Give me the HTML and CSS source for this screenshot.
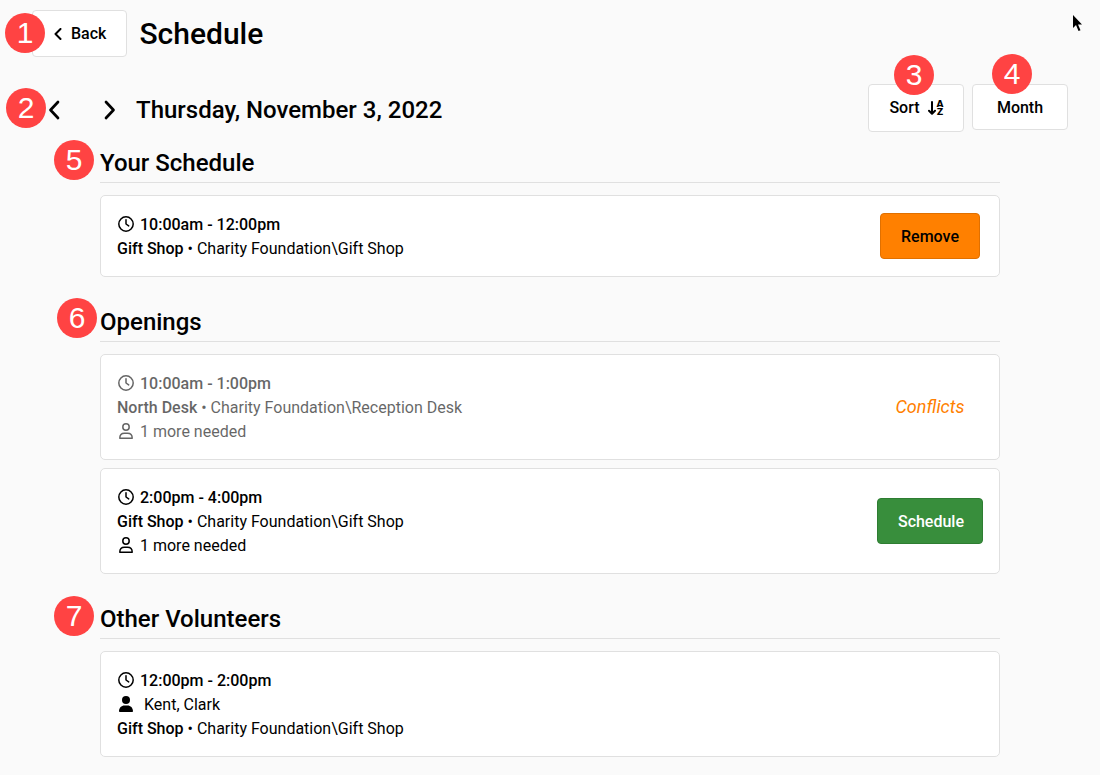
FILE: index.html
```html
<!DOCTYPE html>
<html lang="en">

<head>
    <meta charset="UTF-8" />
    <meta name="viewport" content="width=device-width, initial-scale=1" />
    <title>Schedule</title>
    <link rel="stylesheet" href="styles.css">
</head>

<body>
    <!-- shared icons -->
    <svg class="sprite" aria-hidden="true">
        <symbol id="icon-clock" viewBox="0 0 16 16">
            <circle cx="8" cy="8" r="7.2" fill="none" stroke="currentColor" stroke-width="1.5" />
            <path d="M8 3.8V8l2.7 1.9" fill="none" stroke="currentColor" stroke-width="1.5" stroke-linecap="round" stroke-linejoin="round" />
        </symbol>
        <symbol id="icon-user" viewBox="0 0 16 16">
            <circle cx="8" cy="4" r="3.2" fill="none" stroke="currentColor" stroke-width="1.5" />
            <path d="M1.8 15.2c0-3 2-4.9 4.6-4.9h3.2c2.6 0 4.6 1.9 4.6 4.9z" fill="none" stroke="currentColor" stroke-width="1.5" stroke-linejoin="round" />
        </symbol>
        <symbol id="icon-user-solid" viewBox="0 0 16 16">
            <circle cx="8" cy="4" r="4" fill="currentColor" />
            <path d="M1 15.2C1 11.9 3.4 9.5 6.5 9.5h3c3.1 0 5.5 2.4 5.5 5.7 0 .5-.3.8-.8.8H1.8c-.5 0-.8-.3-.8-.8z" fill="currentColor" />
        </symbol>
    </svg>

    <header class="header">
        <div class="marked">
            <button class="btn btn-back" type="button">
                <svg class="back-icon" viewBox="0 0 8 12"><path d="M6.5 1L1.500 6l5 5" /></svg>
                Back
            </button>
            <span class="badge badge-back">1</span>
        </div>
        <h1>Schedule</h1>
    </header>

    <div class="toolbar">
        <div class="marked date-nav">
            <button class="arrow" type="button" aria-label="Previous day">
                <svg viewBox="0 0 12 20"><path d="M10 2L2.500 10l7.500 8" /></svg>
            </button>
            <button class="arrow" type="button" aria-label="Next day">
                <svg viewBox="0 0 12 20"><path d="M2 2l7.500 8L2 18" /></svg>
            </button>
            <span class="badge badge-nav">2</span>
        </div>
        <h2 class="date">Thursday, November 3, 2022</h2>
        <div class="marked">
            <button class="btn btn-sort" type="button">
                Sort
                <svg class="sort-icon" viewBox="0 0 16 16">
                    <path d="M4 2v11.500M1 10.800l3 3 3-3" />
                    <text x="12" y="7">A</text>
                    <text x="12" y="15">Z</text>
                </svg>
            </button>
            <span class="badge badge-sort">3</span>
        </div>
        <div class="marked">
            <button class="btn" type="button">Month</button>
            <span class="badge badge-month">4</span>
        </div>
    </div>

    <main class="content">
        <section>
            <h2 class="marked">Your Schedule<span class="badge badge-section">5</span></h2>
            <div class="card">
                <div class="info">
                    <p class="time"><svg class="icon"><use href="#icon-clock" /></svg>10:00am - 12:00pm</p>
                    <p><b>Gift Shop</b> • Charity Foundation\Gift Shop</p>
                </div>
                <div class="action">
                    <button class="btn btn-remove" type="button">Remove</button>
                </div>
            </div>
        </section>

        <section>
            <h2 class="marked">Openings<span class="badge badge-openings">6</span></h2>
            <div class="card">
                <div class="info muted">
                    <p class="time"><svg class="icon"><use href="#icon-clock" /></svg>10:00am - 1:00pm</p>
                    <p><b>North Desk</b> • Charity Foundation\Reception Desk</p>
                    <p><svg class="icon"><use href="#icon-user" /></svg>1 more needed</p>
                </div>
                <div class="action">
                    <em class="conflicts">Conflicts</em>
                </div>
            </div>
            <div class="card">
                <div class="info">
                    <p class="time"><svg class="icon"><use href="#icon-clock" /></svg>2:00pm - 4:00pm</p>
                    <p><b>Gift Shop</b> • Charity Foundation\Gift Shop</p>
                    <p><svg class="icon"><use href="#icon-user" /></svg>1 more needed</p>
                </div>
                <div class="action">
                    <button class="btn btn-schedule" type="button">Schedule</button>
                </div>
            </div>
        </section>

        <section>
            <h2 class="marked">Other Volunteers<span class="badge badge-section">7</span></h2>
            <div class="card">
                <div class="info">
                    <p class="time"><svg class="icon"><use href="#icon-clock" /></svg>12:00pm - 2:00pm</p>
                    <p><svg class="icon icon-person"><use href="#icon-user-solid" /></svg>Kent, Clark</p>
                    <p><b>Gift Shop</b> • Charity Foundation\Gift Shop</p>
                </div>
            </div>
        </section>
    </main>

    <svg class="cursor" viewBox="0 0 9 17" aria-hidden="true">
        <path d="M0 0v13l3-3 2.500 6 2-.8L5 9.500h4z" />
    </svg>
</body>

</html>
```
FILE: styles.css
```css
* {
    box-sizing: border-box;
}

body {
    background-color: #fafafa;
    color: #000;
    font-family: Roboto, Arial, sans-serif;
    font-size: 16px;
    line-height: 24px;
    margin: 0;
    padding: 10px 0 16px;
    position: relative;
}

h1,
h2,
p {
    margin: 0;
}

h1,
h2,
b {
    font-weight: 500;
}

h1 {
    font-size: 30px;
    line-height: 48px;
}

h2 {
    font-size: 24px;
    line-height: 34px;
}

.sprite {
    display: none;
}

.header {
    display: flex;
    gap: 12px;
    padding: 0 32px;
}

.toolbar {
    display: flex;
    gap: 8px;
    margin-top: 26px;
    padding: 0 32px;
}

.date-nav {
    display: flex;
    align-items: center;
    gap: 12px;
    height: 52px;
}

.date {
    flex: 1;
    line-height: 52px;
    margin-left: -4px;
}

.btn {
    display: flex;
    align-items: center;
    justify-content: center;
    background-color: #fff;
    border: 1px solid #e0e0e0;
    border-radius: 4px;
    color: #000;
    cursor: pointer;
    font: inherit;
    font-weight: 500;
    height: 46px;
    padding: 2px 20px 0;
}

.btn-back {
    height: 47px;
    padding: 0 20px 0 21px;
}

.toolbar .btn {
    min-width: 96px;
}

.toolbar .btn-sort {
    gap: 8px;
    height: 48px;
    padding: 0 19px 0 20px;
}

.btn-remove {
    background-color: #ff8000;
    border-color: #e07000;
}

.btn-schedule {
    background-color: #388e3c;
    border-color: #2e7d32;
    color: #fff;
    padding: 2px 18px 0 20px;
}

.arrow {
    background: none;
    border: none;
    cursor: pointer;
    height: 44px;
    padding: 0;
    width: 44px;
}

.arrow svg {
    display: block;
    height: 20px;
    margin: 0 auto;
    width: 12px;
}

.arrow path,
.back-icon path,
.sort-icon path {
    fill: none;
    stroke: #000;
    stroke-linecap: round;
    stroke-linejoin: round;
    stroke-width: 2;
}

.arrow path {
    stroke-width: 2.7;
}

.back-icon {
    height: 12px;
    margin-right: 9px;
    width: 8px;
}

.sort-icon {
    height: 16px;
    width: 16px;
}

.sort-icon text {
    font-family: "DejaVu Sans", sans-serif;
    font-size: 9px;
    font-weight: 700;
    text-anchor: middle;
}

.content {
    margin: 10px auto 0;
    max-width: 900px;
}

section + section {
    margin-top: 28px;
}

section h2 {
    border-bottom: 1px solid #e0e0e0;
    margin-bottom: 12px;
    padding-bottom: 2px;
}

.card {
    display: flex;
    align-items: center;
    justify-content: space-between;
    background-color: #fff;
    border: 1px solid #e0e0e0;
    border-radius: 5px;
    padding: 0 16px;
}

.card + .card {
    margin-top: 8px;
}

.info {
    padding: 17px 0 15px;
}

.info p {
    display: flow-root;
}

.info .time {
    font-weight: 500;
}

.muted {
    opacity: 0.6;
}

.icon {
    float: left;
    height: 16px;
    margin: 3px 5px 0 0;
    width: 18px;
}

.icon-person {
    margin-right: 9px;
}

.action {
    display: flex;
    justify-content: center;
    min-width: 106px;
}

.conflicts {
    color: #ff8000;
    font-size: 18px;
}

/* numbered markers that sit over the controls */
.marked {
    position: relative;
}

.badge {
    position: absolute;
    background-color: #ff4343;
    border-radius: 50%;
    color: #fff;
    font-family: "Liberation Sans", Arial, sans-serif;
    font-size: 30px;
    font-weight: 400;
    height: 40px;
    line-height: 40px;
    text-align: center;
    width: 40px;
}

.badge-back {
    left: -27px;
    top: 3px;
}

.badge-nav {
    left: -26px;
    top: 4px;
}

.badge-sort {
    left: 26px;
    top: -29px;
}

.badge-month {
    left: 20px;
    top: -30px;
}

.badge-section {
    left: -46px;
    top: -6px;
}

.badge-openings {
    left: -43px;
    top: -7px;
}

.cursor {
    position: absolute;
    height: 17px;
    right: 18px;
    top: 15px;
    width: 9px;
}
```
